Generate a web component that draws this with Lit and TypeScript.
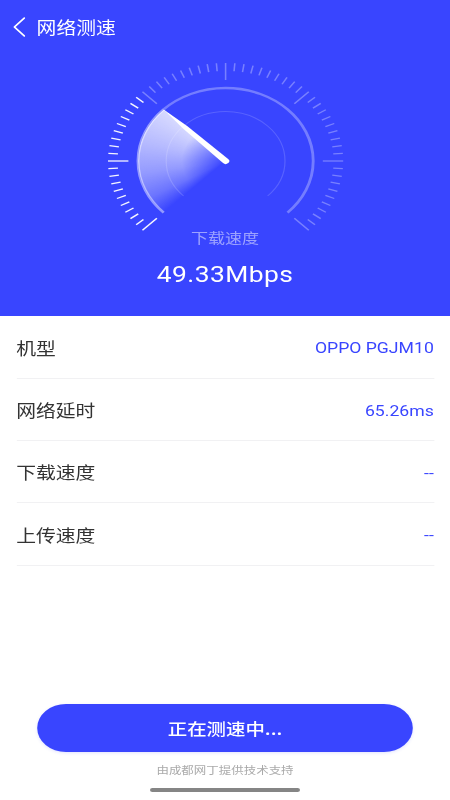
import { LitElement, html, css, svg } from "lit";
import { customElement } from "lit/decorators.js";

const CX = 100;
const CY = 100;
const polar = (r: number, sweep: number) => {
  const a = ((225 + sweep) * Math.PI) / 180;
  return [CX + r * Math.sin(a), CY - r * Math.cos(a)];
};
const arc = (r: number, from: number, to: number) => {
  const [x1, y1] = polar(r, from);
  const [x2, y2] = polar(r, to);
  return `M${x1.toFixed(2)} ${y1.toFixed(2)}A${r} ${r} 0 ${to - from > 180 ? 1 : 0} 1 ${x2.toFixed(2)} ${y2.toFixed(2)}`;
};

const rows = [
  ["机型", "OPPO PGJM10"],
  ["网络延时", "65.26ms"],
  ["下载速度", "--"],
  ["上传速度", "--"],
];

@customElement("app-root")
export class AppRoot extends LitElement {
  static styles = css`
    :host {
      display: block;
      width: 375px;
      height: 800px;
      transform: scaleX(1.2);
      transform-origin: 0 0;
      font-family: "Noto Sans CJK SC", Roboto, sans-serif;
      background: #fff;
      color: #333;
    }
    .page { display: flex; flex-direction: column; height: 800px; }
    .hero {
      height: 316px;
      box-sizing: border-box;
      background: #3945ff;
      color: #fff;
      display: flex;
      flex-direction: column;
      align-items: center;
    }
    .nav {
      align-self: stretch;
      height: 60px;
      box-sizing: border-box;
      padding: 0 0 7px 11px;
      display: flex;
      align-items: center;
      gap: 9.5px;
      font-size: 16.5px;
    }
    .nav svg { width: 10px; height: 20px; flex: none; }
    .gauge { position: relative; width: 200px; height: 167px; flex: none; margin-top: 0.5px; }
    .gauge svg { position: absolute; inset: 0; width: 200px; height: 200px; overflow: visible; }
    .sector {
      position: absolute;
      left: 27px;
      top: 27px;
      width: 146px;
      height: 146px;
      border-radius: 50%;
      background: conic-gradient(from 225deg, rgba(255,255,255,0) 0deg, rgba(255,255,255,0.26) 15deg, rgba(255,255,255,0.46) 35deg, rgba(255,255,255,0.63) 60deg, rgba(255,255,255,0.8) 90deg, rgba(255,255,255,0) 90deg);
      -webkit-mask-image: radial-gradient(circle closest-side, rgba(0,0,0,0.1) 4%, #000 50%);
      mask-image: radial-gradient(circle closest-side, rgba(0,0,0,0.1) 4%, #000 50%);
    }
    .label { font-size: 14.2px; line-height: 20px; color: rgba(255,255,255,0.5); margin-top: -1px; }
    .speed { font-family: Roboto, sans-serif; font-size: 22px; line-height: 28px; margin-top: 14.5px; letter-spacing: 0.35px; }
    .rows { padding: 0.6px 13.5px 0; display: flex; flex-direction: column; }
    .row {
      height: 62.3px;
      box-sizing: border-box;
      padding-top: 1px;
      display: flex;
      align-items: center;
      justify-content: space-between;
      border-bottom: 1px solid #f1f1f3;
      font-size: 16.5px;
    }
    .val { font-family: Roboto, sans-serif; font-size: 14.7px; color: #3945ff; padding-top: 1px; }
    .grow { flex: 1; }
    .btn {
      align-self: center;
      width: 313px;
      height: 48.5px;
      border-radius: 25px;
      background: #3945ff;
      box-shadow: 0 1px 3px rgba(57,69,255,0.15);
      color: #fff;
      display: flex;
      align-items: center;
      justify-content: center;
      font-size: 16.2px;
      font-weight: 500;
    }
    .credit { text-align: center; font-size: 10.4px; line-height: 16px; color: #aaa; margin-top: 10px; }
    .home {
      align-self: center;
      width: 125px;
      height: 4px;
      border-radius: 2px;
      background: #858585;
      margin: 10px 0 8px;
    }
  `;

  private ticks() {
    const out = [];
    for (let i = 0; i <= 60; i++) {
      const major = i % 10 === 0;
      const sweep = i * 4.5;
      const [x1, y1] = polar(98, sweep);
      const [x2, y2] = polar(major ? 81 : 90, sweep);
      const on = i < 20;
      const stroke = on ? "rgba(255,255,255,0.95)" : "rgba(255,255,255,0.32)";
      out.push(svg`<line x1=${x1.toFixed(2)} y1=${y1.toFixed(2)} x2=${x2.toFixed(2)} y2=${y2.toFixed(2)} stroke=${stroke} stroke-width="1.3"></line>`);
    }
    return out;
  }

  render() {
    const [tx, ty] = polar(73, 90);
    const nx = CX - tx, ny = CY - ty;
    const len = Math.hypot(nx, ny);
    const ux = nx / len, uy = ny / len;
    const px = -uy, py = ux;
    const w = 3;
    const mx = CX - nx * 0.65, my = CY - ny * 0.65;
    const m = 2.1;
    const needle = `M${tx} ${ty}L${mx + px * m} ${my + py * m}L${CX + px * w} ${CY + py * w}A${w} ${w} 0 0 0 ${CX - px * w} ${CY - py * w}L${mx - px * m} ${my - py * m}Z`;
    return html`
      <div class="page">
        <div class="hero">
          <div class="nav">
            <svg viewBox="0 0 10 20" fill="none" stroke="#fff" stroke-width="1.6" stroke-linecap="round" stroke-linejoin="round">
              <path d="M9.3 1 L1 10 L9.3 19"></path>
            </svg>
            <span>网络测速</span>
          </div>
          <div class="gauge">
            <div class="sector"></div>
            <svg viewBox="0 0 200 200" fill="none">
              ${this.ticks()}
              <path d=${arc(49.5, 0, 270)} stroke="rgba(255,255,255,0.16)" stroke-width="1"></path>
              <path d=${arc(73, 90, 270)} stroke="rgba(255,255,255,0.3)" stroke-width="2.4"></path>
              <path d=${arc(73, 0, 90)} stroke="rgba(255,255,255,0.45)" stroke-width="2.4"></path>
              <path d=${needle} fill="#fff"></path>
            </svg>
          </div>
          <div class="label">下载速度</div>
          <div class="speed">49.33Mbps</div>
        </div>
        <div class="rows">
          ${rows.map(([k, v]) => html`<div class="row"><span>${k}</span><span class="val">${v}</span></div>`)}
        </div>
        <div class="grow"></div>
        <div class="btn">正在测速中...</div>
        <div class="credit">由成都网丁提供技术支持</div>
        <div class="home"></div>
      </div>
    `;
  }
}
